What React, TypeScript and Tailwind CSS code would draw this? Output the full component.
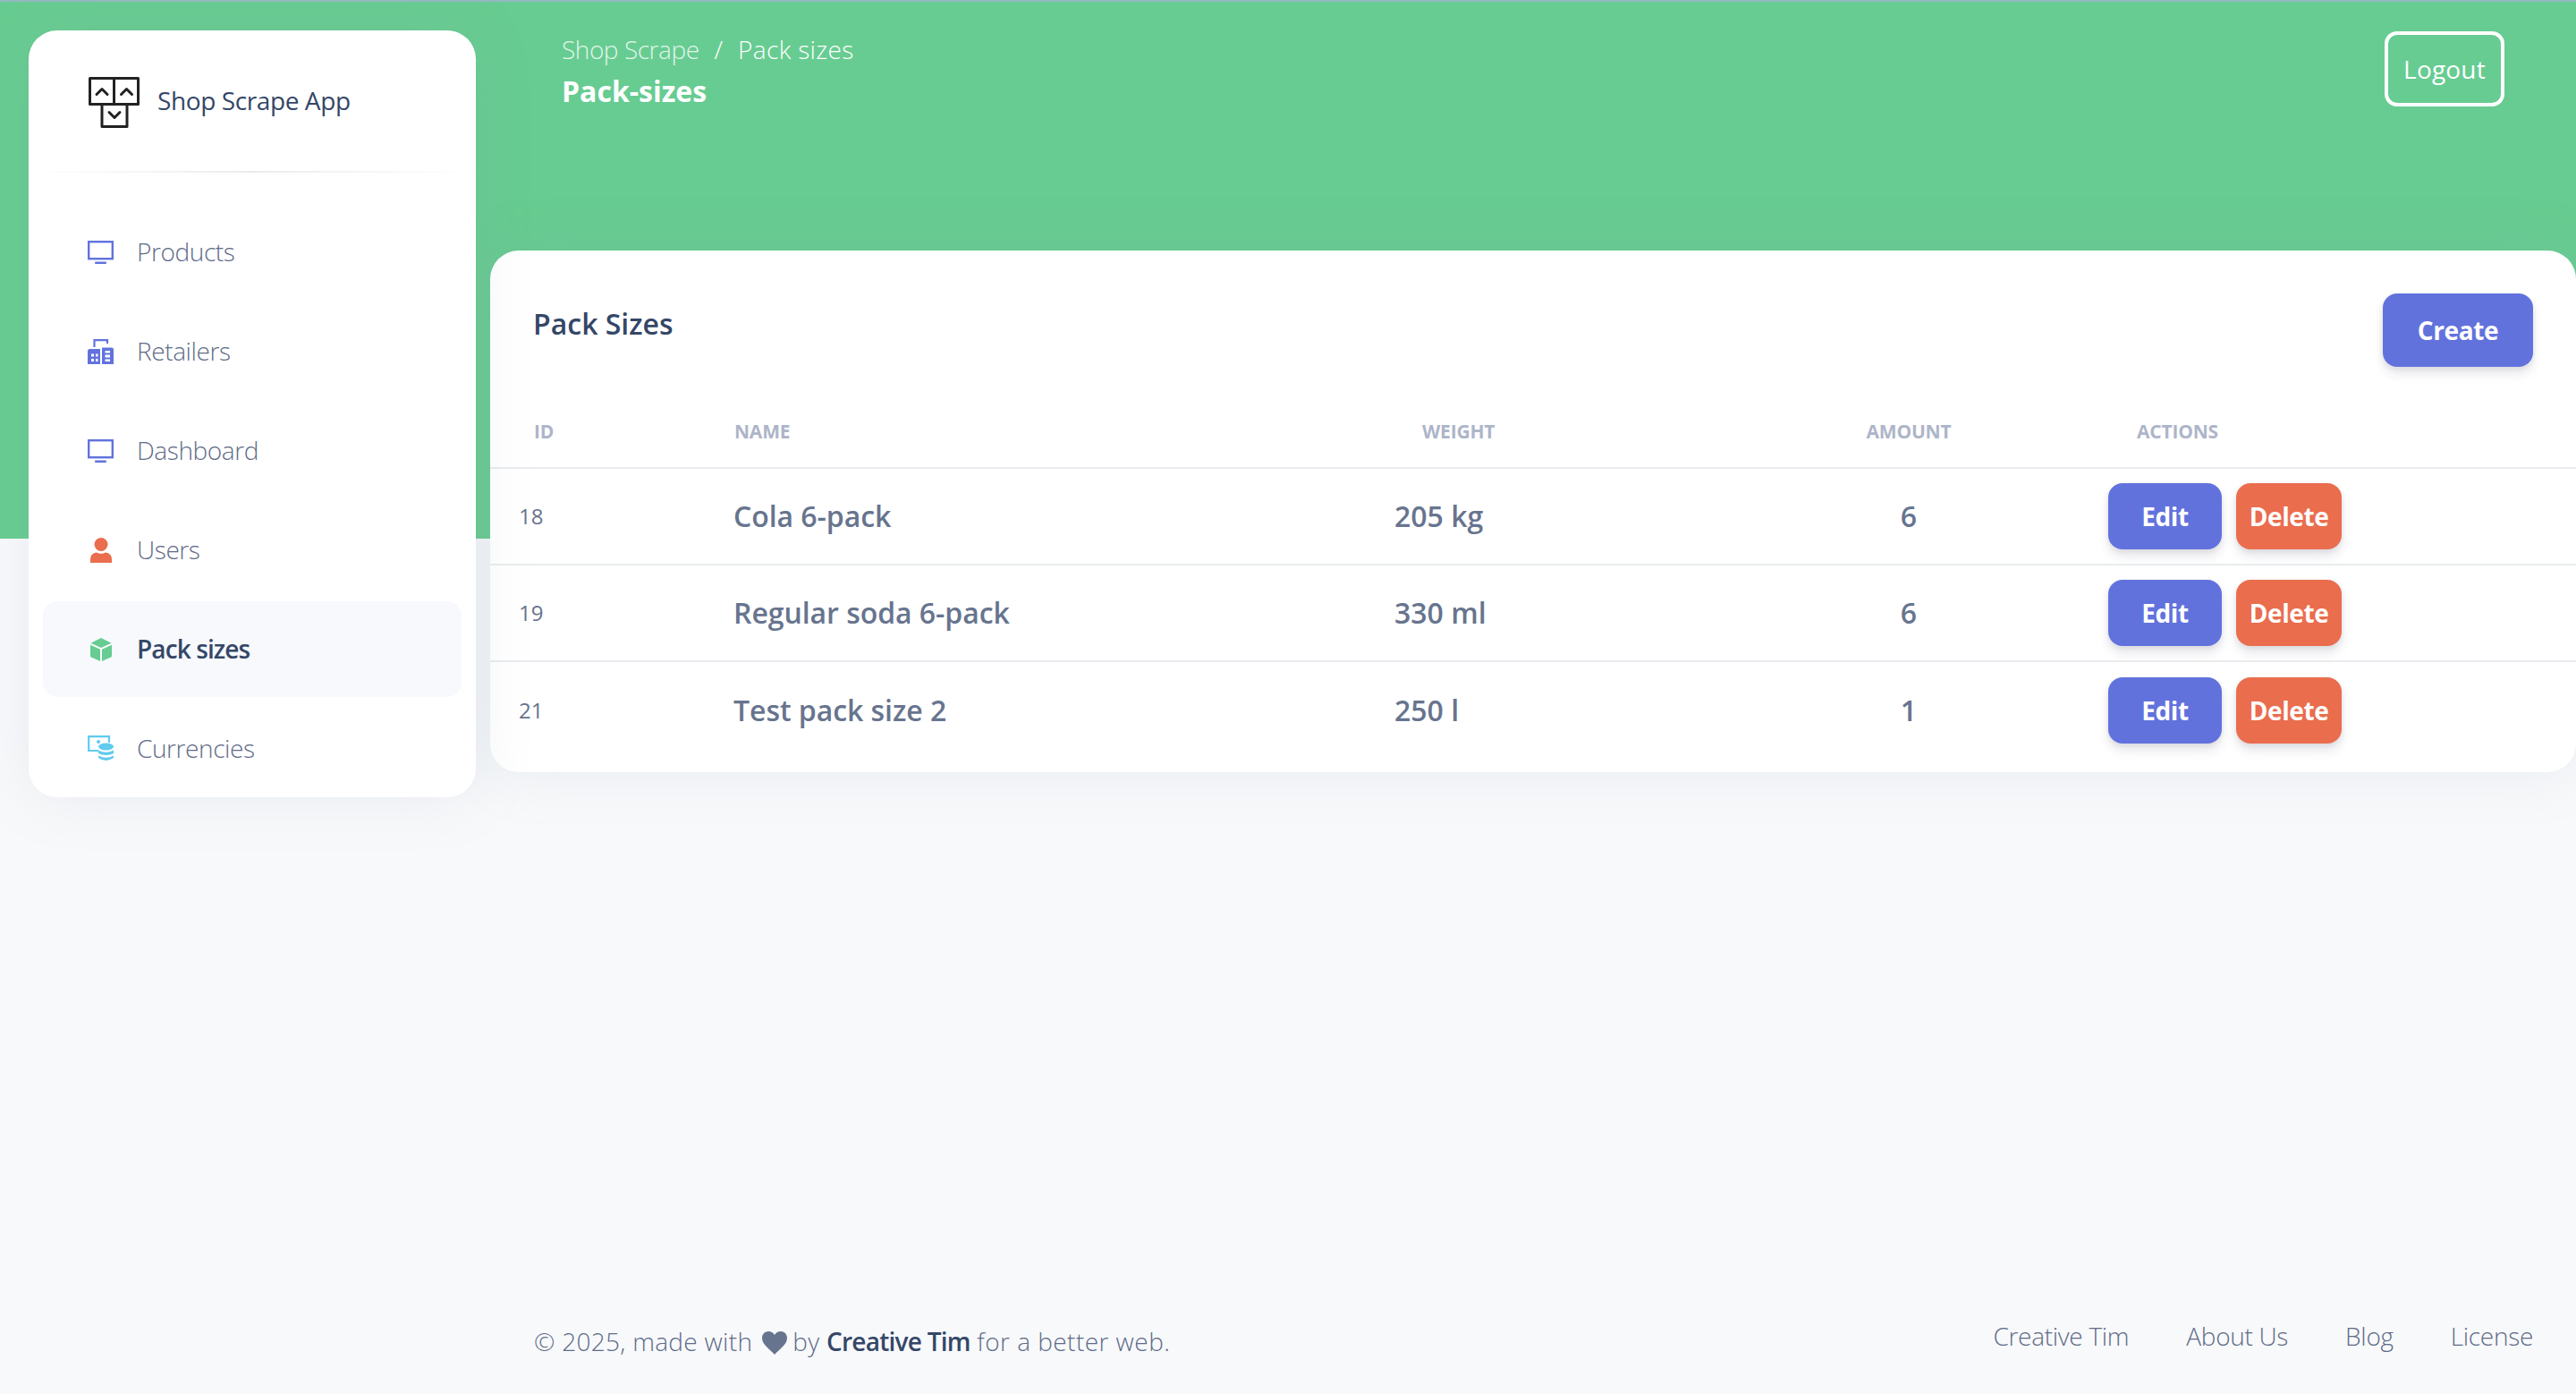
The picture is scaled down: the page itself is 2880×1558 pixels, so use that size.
import React from 'react';

const MonitorIcon = () => (
  <svg width="29" height="26" viewBox="0 0 29 26" fill="none">
    <rect x="1.2" y="1.2" width="26.6" height="19" stroke="#6272dd" strokeWidth="2.4" />
    <rect x="8" y="23.6" width="13" height="2.4" rx="1" fill="#6272dd" />
  </svg>
);

const BuildingIcon = () => (
  <svg width="29" height="28" viewBox="0 0 29 28" fill="none">
    <path d="M7.5 9V1.2H22V5" stroke="#6272dd" strokeWidth="2.2" />
    <path
      fillRule="evenodd"
      clipRule="evenodd"
      fill="#6272dd"
      d="M0 13.5Q0 11 2.5 11H14V28H0ZM16 9.5H27Q29 9.5 29 11.5V28H16ZM4 16.5V19.5H7V16.5ZM9 16.5V19.5H11.5V16.5ZM4 22V25H7V22ZM9 22V25H11.5V22ZM19.5 13V15.5H25V13ZM19.5 17.5V20.5H25V17.5ZM19.5 22.5V25H25V22.5Z"
    />
  </svg>
);

const UserIcon = () => (
  <svg width="24" height="28" viewBox="0 0 24 28" fill="#ea6d4e">
    <circle cx="12" cy="7.5" r="7.5" />
    <path d="M0 28V24Q0 17.5 7 16.5Q12 19 17 16.5Q24 17.5 24 24V28Z" />
  </svg>
);

const CubeIcon = () => (
  <svg width="24" height="26" viewBox="0 0 24 26" fill="#67cc91">
    <path d="M12 0L23.5 5.8L12 11L.5 5.8Z" />
    <path d="M0 7.8L11 12.8V26L1 21.6Q0 21 0 20Z" />
    <path d="M24 7.8L13 12.8V26L23 21.6Q24 21 24 20Z" />
  </svg>
);

const CurrencyIcon = () => (
  <svg width="29" height="29" viewBox="0 0 29 29" fill="none">
    <path d="M12 17H1.2V1.2H24V8" stroke="#5fcbee" strokeWidth="2.2" />
    <circle cx="12" cy="7" r="2" fill="#5fcbee" />
    <ellipse cx="20.5" cy="12.5" rx="8.5" ry="4" fill="#5fcbee" />
    <path d="M12 16.5Q20.5 21 29 16.5V20Q20.5 24 12 20Z" fill="#5fcbee" />
    <path d="M12 22.5Q20.5 27 29 22.5V25Q20.5 31 12 25Z" fill="#5fcbee" />
  </svg>
);

const Logo = () => (
  <svg width="57" height="57" viewBox="0 0 57 57" fill="none" stroke="#222" strokeWidth="3" strokeLinejoin="round">
    <rect x="1.5" y="1.5" width="27" height="29" />
    <rect x="28.5" y="1.5" width="27" height="29" />
    <rect x="15" y="30.5" width="28" height="25" />
    <path d="M9 19.5L15 13.5L21 19.5" strokeLinecap="round" />
    <path d="M36.5 19.5L42.5 13.5L48.5 19.5" strokeLinecap="round" />
    <path d="M23 39.5L29 45.5L35 39.5" strokeLinecap="round" />
  </svg>
);

const HeartIcon = () => (
  <svg width="28" height="26" viewBox="0 0 28 26" fill="#67748e" className="inline-block align-[-4px] ml-[11px] mr-[6px]">
    <path d="M14 26C9 20 0 15 0 7.5C0 3 3.2 0 7.2 0C10 0 12.6 1.5 14 4C15.4 1.5 18 0 20.8 0C24.8 0 28 3 28 7.5C28 15 19 20 14 26Z" />
  </svg>
);

const navItems = [
  { label: 'Products', icon: <MonitorIcon /> },
  { label: 'Retailers', icon: <BuildingIcon /> },
  { label: 'Dashboard', icon: <MonitorIcon /> },
  { label: 'Users', icon: <UserIcon /> },
  { label: 'Pack sizes', icon: <CubeIcon />, active: true },
  { label: 'Currencies', icon: <CurrencyIcon /> },
];

const packSizes = [
  { id: 18, name: 'Cola 6-pack', weight: '205 kg', amount: 6 },
  { id: 19, name: 'Regular soda 6-pack', weight: '330 ml', amount: 6 },
  { id: 21, name: 'Test pack size 2', weight: '250 l', amount: 1 },
];

const btnShadow = 'shadow-[0_8px_12px_rgba(50,50,93,0.11),0_2px_6px_rgba(0,0,0,0.08)]';

const Sidebar = () => (
  <aside className="relative w-[500px] h-[857px] shrink-0 ml-[32px] mt-[34px] bg-white rounded-[32px] shadow-[0_0_64px_rgba(136,152,170,0.15)]">
    <div className="h-[157px] flex items-center pl-[67px] pt-[4px] gap-[20px]">
      <Logo />
      <span className="mb-[5px] text-[28px] font-medium text-[#344767] tracking-[-0.4px]">Shop Scrape App</span>
    </div>
    <div className="h-[2px] bg-gradient-to-r from-transparent via-[#e9ecef] to-transparent" />
    <ul className="mt-[35px] px-[16px] flex flex-col gap-[4px]">
      {navItems.map((item) => (
        <li
          key={item.label}
          className={`h-[107px] flex items-center rounded-[16px] ${item.active ? 'bg-[#f7f9fd]' : ''}`}
        >
          <span className="w-[105px] pl-[50px] flex justify-start shrink-0">
            <span className="w-[29px] flex justify-center">{item.icon}</span>
          </span>
          <span
            className={`mb-[2px] text-[28px] ${
              item.active
                ? 'font-semibold text-[#344767] tracking-[-0.9px]'
                : 'font-light text-[#5f6c88] tracking-[-0.4px]'
            }`}
          >
            {item.label}
          </span>
        </li>
      ))}
    </ul>
  </aside>
);

const App = () => {
  return (
    <div className="relative min-h-screen h-[1558px] overflow-hidden bg-[#f8f9fb] font-['Open_Sans',sans-serif]">
      <div className="absolute inset-x-0 top-0 h-[602px] bg-[#67cc91] border-t-2 border-[#97b9c0]" />
      <div className="relative flex h-full">
        <Sidebar />
        <main className="flex-1 min-w-0 flex flex-col">
          <header className="h-[280px] flex justify-between items-start pl-[96px] pr-[80px]">
            <div className="pt-[35px]">
              <div className="text-[28px] leading-[40px] font-light text-white">
                <span className="opacity-80 tracking-[-0.45px]">Shop Scrape</span>
                <span className="mx-[17px]">/</span>
                <span className="tracking-[0.35px]">Pack sizes</span>
              </div>
              <h1 className="mt-[3px] text-[32px] leading-[48px] font-bold text-white">Pack-sizes</h1>
            </div>
            <button className="mt-[35px] w-[134px] h-[84px] border-4 border-white rounded-[14px] text-white text-[28px] font-medium tracking-[0.2px]">
              Logout
            </button>
          </header>

          <section className="ml-[16px] h-[583px] bg-white rounded-[32px] shadow-[0_0_64px_rgba(136,152,170,0.15)]">
            <div className="h-[160px] flex justify-between pl-[48px] pr-[48px] pt-[48px]">
              <h3 className="text-[32px] leading-[68px] font-semibold text-[#344767]">Pack Sizes</h3>
              <button className={`w-[168px] h-[82px] rounded-[16px] bg-[#6272dd] text-white text-[28px] font-bold tracking-[-0.4px] ${btnShadow}`}>
                Create
              </button>
            </div>
            <table className="w-full table-fixed border-collapse">
              <colgroup>
                <col className="w-[225px]" />
                <col className="w-[738px]" />
                <col className="w-[469px]" />
                <col className="w-[308px]" />
                <col />
              </colgroup>
              <thead>
                <tr className="h-[83px] text-left text-[21px] text-[#adb5c9]">
                  <th className="pl-[49px] pt-[4px] font-bold tracking-[-0.2px]">ID</th>
                  <th className="pl-[48px] pt-[4px] font-bold tracking-[-0.2px]">NAME</th>
                  <th className="pl-[79px] pt-[4px] font-bold tracking-[-0.2px]">WEIGHT</th>
                  <th className="text-center pt-[4px] font-bold tracking-[-0.2px]">AMOUNT</th>
                  <th className="pl-[101px] pt-[4px] font-bold tracking-[-0.2px]">ACTIONS</th>
                </tr>
              </thead>
              <tbody>
                {packSizes.map((row) => (
                  <tr key={row.id} className="h-[108px] border-t-2 border-[#e9ecef] text-[#67748e]">
                    <td className="pl-[32px] text-[24px]">{row.id}</td>
                    <td className="pl-[47px] text-[32px] font-semibold tracking-[-0.05px]">{row.name}</td>
                    <td className="pl-[48px] text-[32px] font-semibold">{row.weight}</td>
                    <td className="text-center text-[32px] font-semibold">{row.amount}</td>
                    <td className="pl-[69px]">
                      <div className="flex gap-[16px]">
                        <button className={`w-[127px] h-[74px] rounded-[16px] bg-[#6272dd] text-white text-[28px] font-bold tracking-[-0.4px] ${btnShadow}`}>
                          Edit
                        </button>
                        <button className={`w-[118px] h-[74px] rounded-[16px] bg-[#ea6d4e] text-white text-[28px] font-bold tracking-[-0.4px] ${btnShadow}`}>
                          Delete
                        </button>
                      </div>
                    </td>
                  </tr>
                ))}
              </tbody>
            </table>
          </section>

          <footer className="mt-auto h-[100px] flex justify-between pl-[65px] pr-[48px] text-[#5f6c88] font-light">
            <p className="text-[28px] leading-[40px] pt-[21px] tracking-[0.3px]">
              © 2025, made with
              <HeartIcon />
              by <span className="font-semibold text-[#344767] tracking-[-0.75px]">Creative Tim</span>{' '}
              <span className="tracking-[0.45px]">for a better web.</span>
            </p>
            <nav className="flex gap-[64px] text-[28px] leading-[40px] pt-[15px] tracking-[-0.3px]">
              <span>Creative Tim</span>
              <span>About Us</span>
              <span>Blog</span>
              <span>License</span>
            </nav>
          </footer>
        </main>
      </div>
    </div>
  );
};

export default App;
